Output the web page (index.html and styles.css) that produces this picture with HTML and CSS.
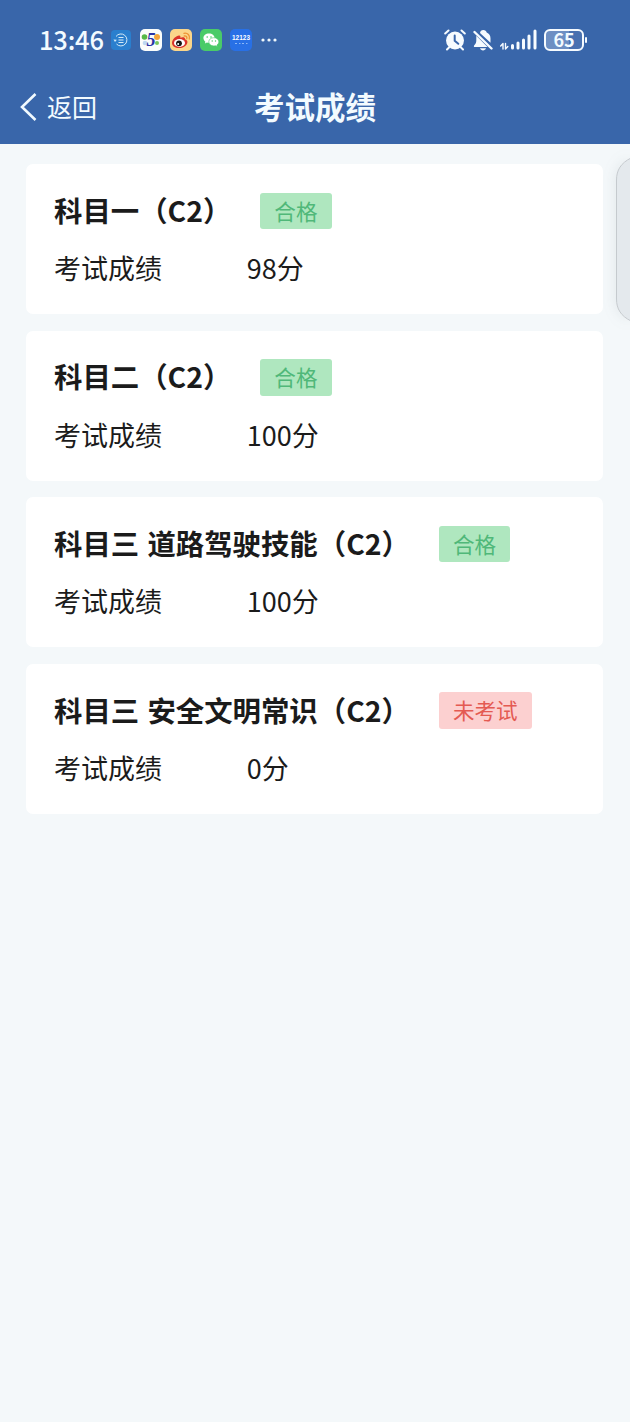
FILE: index.html
```html
<!DOCTYPE html>
<html lang="zh-CN">
<head>
  <meta charset="UTF-8" />
  <meta name="viewport" content="width=device-width, initial-scale=1.0" />
  <title>考试成绩</title>
  <link rel="stylesheet" href="styles.css">
</head>
<body>
  <header class="header">
    <div class="status-bar">
      <span class="time">13:46</span>
      <div class="app-icons">
        <svg width="20" height="20" viewBox="0 0 20 20">
          <rect width="20" height="20" rx="4" fill="#2a7fce"/>
          <path d="M5 6.500A6 6 0 1 1 5.500 14" fill="none" stroke="#d5ebf7" stroke-width="1"/>
          <path d="M2.500 9.500L4 12l1.800-2.300z" fill="#d5ebf7"/>
          <path d="M7.500 7.500h5M7.500 10h5M7.500 12.500h5" stroke="#d5ebf7" stroke-width="1.200"/>
        </svg>
        <svg width="22" height="22" viewBox="0 0 22 22">
          <rect width="22" height="22" rx="5" fill="#fbfdfb"/>
          <circle cx="4.500" cy="8" r="2.800" fill="#57b947"/>
          <circle cx="17" cy="8" r="3" fill="#f3a43a"/>
          <circle cx="5" cy="14" r="2.300" fill="#bfd9f2"/>
          <circle cx="17" cy="14" r="2" fill="#79c65b"/>
          <text class="five" x="11" y="17" text-anchor="middle">5</text>
        </svg>
        <svg width="22" height="22" viewBox="0 0 22 22">
          <rect width="22" height="22" rx="5" fill="#fbd68a"/>
          <path d="M2 14c0-4 5-8 7.500-7.500 1.200.3 1 1.700.8 2.300 2-.8 5-.9 4.700 1.500 1.700.5 2.600 1.600 2.400 3.200-.5 3.500-4.500 5.500-8.400 5.500S2 17 2 14z" fill="#d9332a"/>
          <ellipse cx="9.500" cy="14" rx="5.500" ry="3.900" fill="#fff"/>
          <circle cx="9" cy="14.300" r="2.900" fill="#161313"/>
          <circle cx="8.200" cy="15" r="1" fill="#fff"/>
          <path d="M14 4.300c3.600-.8 6.300 2.200 5.300 5.700M14.300 7c1.800-.4 3 1 2.500 2.600" fill="none" stroke="#ee9334" stroke-width="1.300" stroke-linecap="round"/>
        </svg>
        <svg width="22" height="22" viewBox="0 0 22 22">
          <rect width="22" height="22" rx="5" fill="#4acb68"/>
          <path d="M9 4.500c-3.200 0-5.600 2-5.600 4.600 0 1.500.8 2.800 2 3.600l-.5 1.700 2-1c.7.2 1.300.3 2.100.3 3.200 0 5.600-2 5.600-4.600S12.200 4.500 9 4.500z" fill="#fff"/>
          <path d="M13.800 8.700c-2.900 0-5 1.800-5 4.100s2.100 4.100 5 4.100c.6 0 1.200-.1 1.700-.2l1.800.9-.4-1.600c1.200-.7 1.900-1.800 1.900-3.200 0-2.300-2.200-4.100-5-4.100z" fill="#fff" stroke="#4acb68" stroke-width=".6"/>
          <g fill="#4acb68"><circle cx="7.200" cy="8" r=".8"/><circle cx="11" cy="8" r=".8"/><circle cx="12.200" cy="12" r=".7"/><circle cx="15.500" cy="12" r=".7"/></g>
        </svg>
        <svg width="22" height="22" viewBox="0 0 22 22">
          <rect width="22" height="22" rx="5" fill="#2870e6"/>
          <text class="traffic" x="11" y="11" text-anchor="middle" textLength="18" lengthAdjust="spacingAndGlyphs">12123</text>
          <path d="M5 14.500h2M9 14.500h1.500M12 14.500h2M16 14.500h1.500" stroke="#8bb7f6"/>
        </svg>
        <svg class="more" width="16" height="4" viewBox="0 0 16 4" fill="#f0f8fc">
          <circle cx="2" cy="2" r="1.600"/><circle cx="8" cy="2" r="1.600"/><circle cx="14" cy="2" r="1.600"/>
        </svg>
      </div>
      <div class="system-icons">
        <svg width="22" height="22" viewBox="0 0 22 22">
          <circle cx="11" cy="11.500" r="9" fill="#f6fbff"/>
          <path d="M1.200 4.500L4.500 1.500M20.800 4.500L17.500 1.500M5 18.500l-2 2M17 18.500l2 2" stroke="#f6fbff" stroke-width="2" stroke-linecap="round"/>
          <path d="M10.700 6.500v5.300l3.600 3" fill="none" stroke="#3966aa" stroke-width="2" stroke-linecap="round"/>
        </svg>
        <svg class="bell" width="20" height="22" viewBox="0 0 20 22">
          <path d="M7 4c.3-1.800 1.400-3 3.300-3s3 1 3.400 2.400c2.400 1 3.800 3 3.800 5.800v4.500z" fill="#f6fbff"/>
          <path d="M3.300 6.800L14.500 18H1.200c-.6-.8-.3-1.500.3-2.100 1.300-1.300 1.800-2.500 1.800-4.500z" fill="#f6fbff"/>
          <path d="M7 19.200h6c-.5 1.400-1.600 2.200-3 2.200s-2.500-.8-3-2.200z" fill="#f6fbff"/>
          <path d="M1.500 3l17 16.500" stroke="#f6fbff" stroke-width="2.400" stroke-linecap="round"/>
        </svg>
        <svg class="signal" width="37" height="21" viewBox="0 0 37 21">
          <path d="M3 20v-5.500L.7 17M5.500 14.500V20l2.300-2.500" fill="none" stroke="#f6fbff" stroke-width="1.400" stroke-linecap="round" stroke-linejoin="round"/>
          <path d="M12.500 16.500v2.500M18 14v5M23.500 11v8M29 7v12M35 2v17" stroke="#f6fbff" stroke-width="3" stroke-linecap="round"/>
        </svg>
        <div class="battery">65</div>
        <div class="battery-tip"></div>
      </div>
    </div>
    <nav class="nav-bar">
      <div class="back">
        <svg width="18" height="30" viewBox="0 0 18 30">
          <path d="M16.500 2L3 15l13.500 13" fill="none" stroke="#f1faff" stroke-width="2.600"/>
        </svg>
        <span>返回</span>
      </div>
      <h1 class="page-title">考试成绩</h1>
    </nav>
  </header>

  <main class="list">
    <section class="card">
      <div class="card-head">
        <h2>科目一（C2）</h2>
        <span class="tag pass">合格</span>
      </div>
      <div class="score"><span class="label">考试成绩</span><span>98分</span></div>
    </section>
    <section class="card">
      <div class="card-head">
        <h2>科目二（C2）</h2>
        <span class="tag pass">合格</span>
      </div>
      <div class="score"><span class="label">考试成绩</span><span>100分</span></div>
    </section>
    <section class="card">
      <div class="card-head">
        <h2>科目三 道路驾驶技能（C2）</h2>
        <span class="tag pass">合格</span>
      </div>
      <div class="score"><span class="label">考试成绩</span><span>100分</span></div>
    </section>
    <section class="card">
      <div class="card-head">
        <h2>科目三 安全文明常识（C2）</h2>
        <span class="tag pending">未考试</span>
      </div>
      <div class="score"><span class="label">考试成绩</span><span>0分</span></div>
    </section>
  </main>

  <svg class="side-handle" width="14" height="169" viewBox="0 0 14 169">
    <path d="M15 3C5 8 .5 15 .5 25v119c0 10 4.500 17 14.500 22" fill="#e4e9ed" stroke="#c5cace"/>
  </svg>
</body>
</html>
```
FILE: styles.css
```css
* {
  box-sizing: border-box;
}
body {
  margin: 0;
  min-height: 1422px;
  position: relative;
  background-color: #f4f8fa;
  color: #1b1b1b;
  font-family: "Noto Sans CJK SC", sans-serif;
}
svg {
  display: block;
  flex: none;
}

/* header */
.header {
  height: 144px;
  background-color: #3966aa;
  color: #f3fbff;
}
.status-bar {
  display: flex;
  align-items: center;
  height: 72px;
  padding: 7px 42px 0 39px;
}
.time {
  width: 72px;
  padding-bottom: 2px;
  font-size: 25.5px;
  font-weight: 500;
  letter-spacing: -0.2px;
  line-height: 30px;
}
.app-icons {
  display: flex;
  align-items: center;
  gap: 8px;
}
.app-icons svg:first-child {
  margin-right: 1px;
}
.more {
  margin-left: 1px;
}
.system-icons {
  display: flex;
  align-items: center;
  margin-left: auto;
}
.bell {
  margin-left: 7px;
}
.signal {
  margin: 0 7px 0 7px;
}
.five {
  font: italic bold 18px "Liberation Serif", serif;
  fill: #2934a5;
}
.traffic {
  font: bold 7px "Liberation Sans", sans-serif;
  fill: #fff;
}
.battery {
  width: 40px;
  height: 22px;
  border: 2px solid #f6fbff;
  border-radius: 6px;
  background: linear-gradient(90deg, #6d8fc3 65%, #4971b0 65%);
  font-size: 18px;
  font-weight: bold;
  line-height: 17px;
  text-align: center;
}
.battery-tip {
  width: 2px;
  height: 6px;
  margin: 0 1px;
  border-radius: 1px;
  background-color: #f6fbff;
}
.nav-bar {
  display: grid;
  grid-template-columns: 1fr auto 1fr;
  align-items: center;
  height: 70px;
  padding: 0 19px;
}
.back {
  display: flex;
  align-items: center;
  gap: 10px;
  font-size: 25px;
  line-height: 36px;
}
.back span {
  padding-bottom: 2px;
}
.page-title {
  margin: 0;
  padding-bottom: 2px;
  font-size: 30.5px;
  line-height: 40px;
}

/* result cards */
.list {
  display: flex;
  flex-direction: column;
  gap: 16.6px;
  padding: 20px 27px 0 26px;
}
.card {
  height: 150px;
  padding: 28.5px 28px 0;
  border-radius: 7px;
  background-color: #fff;
}
.card-head {
  display: flex;
  align-items: center;
  gap: 29px;
  height: 36.5px;
}
.card-head h2 {
  margin: 0;
  padding-bottom: 2px;
  font-size: 28.4px;
  line-height: 36px;
  word-spacing: 1.8px;
}
.tag {
  padding: 0 14px;
  border-radius: 3px;
  font-size: 21.6px;
  line-height: 36.5px;
}
.pass {
  background-color: #afe7bf;
  color: #50b879;
}
.pending {
  background-color: #fcd0d0;
  color: #e45a52;
}
.score {
  display: flex;
  margin-top: 19px;
  font-size: 27px;
  line-height: 40px;
}
.label {
  width: 192.8px;
}

/* floating panel handle on the right edge */
.side-handle {
  position: absolute;
  top: 155px;
  right: 0;
  filter: drop-shadow(0 0 7px rgba(80, 100, 110, 0.12));
}
```
